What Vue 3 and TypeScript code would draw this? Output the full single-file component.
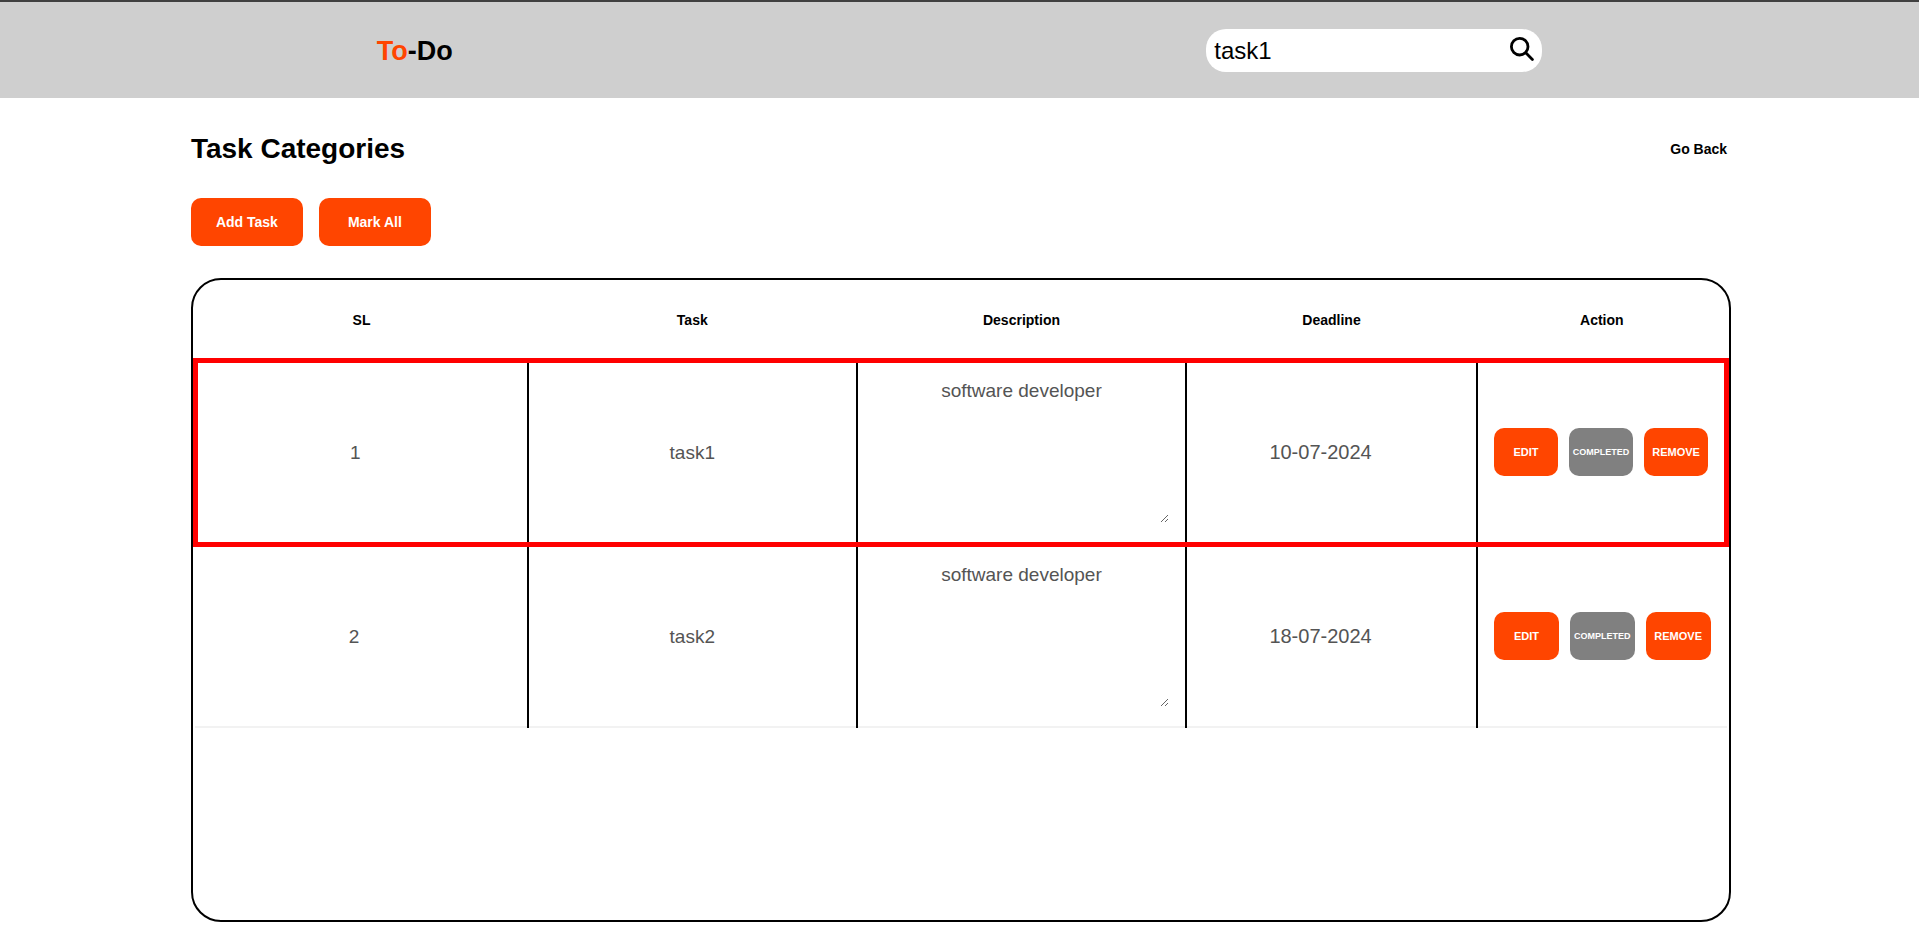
<script setup lang="ts">
import { computed, ref } from 'vue'

interface Task {
  id: number
  title: string
  description: string
  deadline: string
}

const tasks = ref<Task[]>([
  { id: 1, title: 'task1', description: 'software developer', deadline: '10-07-2024' },
  { id: 2, title: 'task2', description: 'software developer', deadline: '18-07-2024' },
])

const query = ref('task1')
const matchId = computed(() => tasks.value.find((task) => task.title === query.value.trim())?.id)

function remove(id: number): void {
  tasks.value = tasks.value.filter((task) => task.id !== id)
}
</script>

<template>
  <header class="topbar">
    <div class="logo"><span class="accent">To</span>-Do</div>
    <form class="search" role="search" @submit.prevent>
      <input v-model="query" class="search-input" type="text" aria-label="Search tasks" />
      <button class="search-button" type="submit" aria-label="Search">
        <svg viewBox="0 0 24 24" width="24" height="24" fill="none" stroke="#000" stroke-width="2.8" stroke-linecap="round">
          <circle cx="9.7" cy="9.7" r="8.3" />
          <path d="M15.8 15.8 22.4 22.4" />
        </svg>
      </button>
    </form>
  </header>

  <main class="page">
    <div class="heading">
      <h1>Task Categories</h1>
      <a class="back" href="#">Go Back</a>
    </div>

    <div class="toolbar">
      <button class="button" type="button">Add Task</button>
      <button class="button" type="button">Mark All</button>
    </div>

    <section class="board">
      <table>
        <colgroup>
          <col class="col-sl" />
          <col class="col-task" />
          <col class="col-description" />
          <col class="col-deadline" />
          <col class="col-action" />
        </colgroup>
        <thead>
          <tr>
            <th scope="col">SL</th>
            <th scope="col">Task</th>
            <th scope="col">Description</th>
            <th scope="col">Deadline</th>
            <th scope="col">Action</th>
          </tr>
        </thead>
        <tbody>
          <tr v-for="task in tasks" :key="task.id" :class="{ found: task.id === matchId }">
            <td><input class="field number" type="text" :value="task.id" aria-label="SL" disabled /></td>
            <td><input class="field" type="text" :value="task.title" aria-label="Task" disabled /></td>
            <td><textarea class="field description" :value="task.description" aria-label="Description" disabled></textarea></td>
            <td><input class="field date" type="text" :value="task.deadline" aria-label="Deadline" disabled /></td>
            <td>
              <div class="actions">
                <button class="button" type="button">EDIT</button>
                <button class="button done" type="button">COMPLETED</button>
                <button class="button" type="button" @click="remove(task.id)">REMOVE</button>
              </div>
            </td>
          </tr>
        </tbody>
      </table>
    </section>
  </main>
</template>

<style>
body {
  margin: 0;
  background: #fff;
  color: #000;
  font-family: "Franklin Gothic Medium", "Liberation Sans", Arial, sans-serif;
}
</style>

<style scoped>
.topbar {
  display: flex;
  align-items: center;
  justify-content: space-around;
  height: 96px;
  border-top: 2px solid #404040;
  background: #cfcfcf;
}

.logo {
  padding-top: 2px;
  font-size: 27px;
  font-weight: 700;
}

.accent {
  color: #ff4500;
}

.search {
  display: flex;
  align-items: center;
  box-sizing: border-box;
  width: 336px;
  height: 43px;
  padding: 0 8px;
  border-radius: 20px;
  background: #fff;
}

.search-input {
  flex: 1;
  min-width: 0;
  padding: 2px 0 0;
  border: 0;
  outline: 0;
  background: none;
  color: #000;
  font: inherit;
  font-size: 24px;
}

.search-button {
  display: flex;
  padding: 0 0 2px;
  border: 0;
  background: none;
  cursor: pointer;
}

.page {
  width: calc(80% + 2px);
  margin: 0 auto;
}

.heading {
  display: flex;
  align-items: center;
  justify-content: space-between;
  box-sizing: border-box;
  height: 100px;
  padding: 2px 1px 0 0;
}

h1 {
  margin: 0;
  font-size: 28px;
  font-weight: 700;
}

.back {
  color: #000;
  font-size: 14px;
  font-weight: 700;
  text-decoration: none;
}

.toolbar {
  display: flex;
  gap: 16px;
  margin-bottom: 32px;
}

.button {
  width: 112px;
  height: 48px;
  padding: 0;
  border: 0;
  border-radius: 10px;
  background: #ff4500;
  color: #fff;
  font: inherit;
  font-size: 14px;
  font-weight: 700;
  cursor: pointer;
}

.board {
  box-sizing: border-box;
  width: calc(100% + 3px);
  min-height: 644px;
  border: 2px solid #000;
  border-radius: 30px;
}

table {
  width: 100%;
  table-layout: fixed;
  border-collapse: collapse;
}

.col-sl {
  width: 21.7%;
}

.col-task,
.col-description {
  width: 21.5%;
}

.col-deadline {
  width: 19%;
}

.col-action {
  width: 16.3%;
}

th {
  padding: 32px 16px 30px;
  font-size: 14px;
  font-weight: 700;
  line-height: 16px;
}

tbody tr {
  border-bottom: 2px solid #f2f2f2;
}

tbody tr.found {
  border: 5px solid #f00;
}

td {
  padding: 16px;
}

td:not(:last-child) {
  border-right: 2px solid #000;
}

.field {
  display: block;
  box-sizing: border-box;
  width: 100%;
  padding: 0;
  border: 0;
  background: none;
  color: #545454;
  font: inherit;
  font-size: 19px;
  text-align: center;
}

.number {
  padding-right: 14px;
}

.date {
  padding-right: 22px;
  font-size: 20px;
}

.description {
  height: 144px;
  margin-bottom: 3px;
  padding-top: 1px;
  resize: both;
}

.actions {
  display: flex;
  gap: 11px;
  padding-bottom: 2px;
}

.actions .button {
  flex: 1;
  min-width: 0;
  font-size: 11px;
}

.actions .done {
  background: #808080;
  font-size: 9px;
}
</style>
